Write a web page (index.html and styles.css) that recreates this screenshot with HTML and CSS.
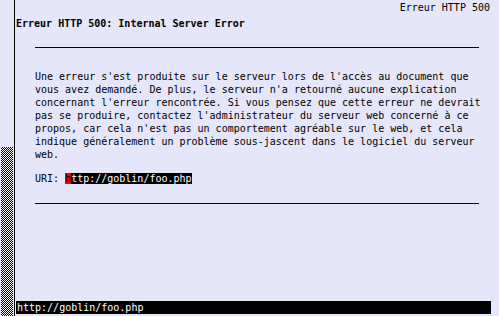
FILE: index.html
```html
<!DOCTYPE html>
<html lang="fr">
<head>
<meta charset="utf-8">
<title>Erreur HTTP 500</title>
<link rel="stylesheet" href="styles.css">
</head>
<body>
<div class="window">
    <div class="scrollbar">
        <div class="thumb"></div>
    </div>
    <div class="main">
        <div class="doc-title">Erreur HTTP 500</div>
        <h1>Erreur HTTP 500: Internal Server Error</h1>
        <div class="content">
            <hr>
            <p>Une erreur s'est produite sur le serveur lors de l'accès au document que<br>
            vous avez demandé. De plus, le serveur n'a retourné aucune explication<br>
            concernant l'erreur rencontrée. Si vous pensez que cette erreur ne devrait<br>
            pas se produire, contactez l'administrateur du serveur web concerné à ce<br>
            propos, car cela n'est pas un comportement agréable sur le web, et cela<br>
            indique généralement un problème sous-jascent dans le logiciel du serveur<br>
            web.</p>
            <p class="uri">URI: <a class="link" href="#"><span class="cursor">h</span>ttp://goblin/foo.php</a></p>
            <hr>
        </div>
        <div class="status">http://goblin/foo.php</div>
    </div>
</div>
</body>
</html>
```

FILE: styles.css
```css
html, body{
	margin:0;
	padding:0;
}
body{
	background:#e6e6fa;
	color:#000;
	font-family:"DejaVu Sans Mono", "Liberation Mono", monospace;
	font-size:10px;
	line-height:13px;
}
.window{
	display:flex;
	height:316px;
}

/* barre de défilement à gauche */
.scrollbar{
	width:14px;
	border-right:1px solid #000;
	display:flex;
	flex-direction:column;
	justify-content:flex-end;
}
.scrollbar .thumb{
	height:169px;
	width:12px;
	margin-left:1px;
	background:repeating-conic-gradient(#000 0 25%, #fff 0 50%) 0 0/2px 2px;
}

.main{
	flex:1;
	display:flex;
	flex-direction:column;
	min-width:0;
}
.doc-title{
	text-align:right;
	padding:2px 9px 0 0;
	line-height:12px;
}
h1{
	font-size:10px;
	font-weight:bold;
	line-height:13px;
	margin:3px 0 0 1px;
}
.content{
	flex:1;
	padding:0 20px 0 20px;
}
hr{
	border:0;
	border-top:1px solid #000;
	margin:17px 0 0 0;
	height:0;
}
p{
	margin:22px 0 0 0;
	white-space:nowrap;
}
.uri{
	margin-top:11px;
}
.link{
	color:#fff;
	background:#000;
	text-decoration:none;
}
.cursor{
	background:#f00;
	color:#000;
}
.content hr:last-child{
	margin-top:18px;
}

/* barre d'état */
.status{
	background:#000;
	color:#fff;
	height:13px;
	line-height:13px;
	margin:0 8px 2px 1px;
	padding-left:1px;
}
```
